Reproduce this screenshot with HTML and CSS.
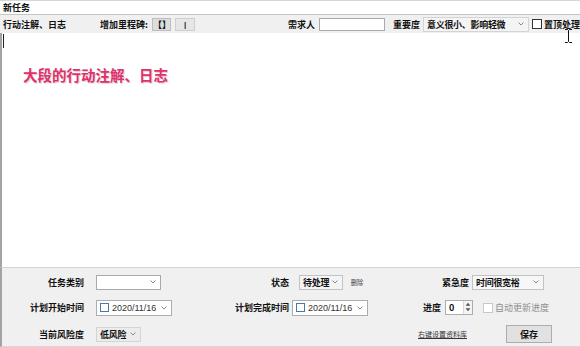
FILE: index.html
```html
<!DOCTYPE html>
<html lang="zh-CN">
<head>
  <meta charset="UTF-8">
  <title>新任务</title>
  <link rel="stylesheet" href="styles.css">
</head>
<body>

  <div class="window">
    <div class="title-row">新任务</div>

    <div class="toolbar">
      <span class="label log-label">行动注解、日志</span>
      <span class="label milestone-label">增加里程碑:</span>
      <button class="tool-btn">【】</button>
      <button class="tool-btn light">|</button>
      <span class="label requester-label">需求人</span>
      <span class="text-input requester"></span>
      <span class="label importance-label">重要度</span>
      <span class="combo importance">意义很小、影响轻微
        <svg class="chev" viewBox="0 0 6 4"><polyline points="0.5,0.5 3,3 5.5,0.5"/></svg>
      </span>
      <span class="check-box"></span>
      <span class="label">置顶处理</span>
    </div>

    <div class="editor">
      <span class="caret"></span>
      <p class="hint">大段的行动注解、日志</p>
    </div>

    <div class="form">
      <!-- row 1 -->
      <span class="label right">任务类别</span>
      <div class="cell"><span class="combo blank task-type">
        <svg class="chev" viewBox="0 0 6 4"><polyline points="0.5,0.5 3,3 5.5,0.5"/></svg>
      </span></div>
      <span class="label right">状态</span>
      <div class="cell"><span class="combo status">待处理
        <svg class="chev" viewBox="0 0 6 4"><polyline points="0.5,0.5 3,3 5.5,0.5"/></svg>
      </span><span class="tiny">删除</span></div>
      <div class="cell urgency-cell"><span class="label">紧急度</span><span class="combo urgency">时间很宽裕
        <svg class="chev" viewBox="0 0 6 4"><polyline points="0.5,0.5 3,3 5.5,0.5"/></svg>
      </span></div>

      <!-- row 2 -->
      <span class="label right">计划开始时间</span>
      <div class="cell"><span class="date start-date"><span class="date-check"></span><span class="date-text">2020/11/16</span>
        <svg class="chev" viewBox="0 0 6 4"><polyline points="0.5,0.5 3,3 5.5,0.5"/></svg>
      </span></div>
      <span class="label right">计划完成时间</span>
      <div class="cell"><span class="date end-date"><span class="date-check"></span><span class="date-text">2020/11/16</span>
        <svg class="chev" viewBox="0 0 6 4"><polyline points="0.5,0.5 3,3 5.5,0.5"/></svg>
      </span></div>
      <div class="cell progress-cell"><span class="label">进度</span>
        <span class="spin"><span class="spin-value">0</span><span class="spin-arrows">
          <svg viewBox="0 0 5 9"><polygon points="2.5,1 4.5,3.5 0.5,3.5"/><polygon points="0.5,5.5 4.5,5.5 2.5,8"/></svg>
        </span></span>
        <span class="check-box disabled"></span><span class="muted">自动更新进度</span>
      </div>

      <!-- row 3 -->
      <span class="label right">当前风险度</span>
      <div class="cell"><span class="combo risk">低风险
        <svg class="chev" viewBox="0 0 6 4"><polyline points="0.5,0.5 3,3 5.5,0.5"/></svg>
      </span></div>
      <span></span>
      <span></span>
      <div class="cell save-cell"><span class="link">右键设置资料库</span><button class="save-btn">保存</button></div>
    </div>

    <!-- mouse pointer over the top bar -->
    <svg class="ibeam" viewBox="0 0 9 14"><path d="M1 0.5h2.5l1 1 1-1H8M4.5 1.5v11M1 13.5h2.5l1-1 1 1H8"/></svg>
  </div>

</body>
</html>
```

FILE: styles.css
```css
body {
  margin: 0;
  background: #fff;
  font-family: "Noto Sans CJK SC", "Liberation Sans", sans-serif;
  font-size: 9px;
  color: #111;
}

.window {
  position: relative;
  width: 580px;
  height: 347px;
  display: flex;
  flex-direction: column;
  border-top: 1px solid #d6d6d6;
  box-sizing: border-box;
  overflow: hidden;
}

.label {
  font-weight: bold;
  white-space: nowrap;
}

.right {
  text-align: right;
}

.title-row {
  height: 13px;
  line-height: 13px;
  padding-left: 3px;
  font-weight: bold;
  border-bottom: 1px solid #c4c4c4;
}

.toolbar {
  height: 18px;
  display: flex;
  align-items: center;
  background: #f0f0f0;
}

.log-label {
  width: 97px;
  padding-left: 3px;
}

.milestone-label {
  width: 52px;
}

.tool-btn {
  height: 13px;
  width: 19px;
  margin-right: 4px;
  padding: 0;
  font-family: "Noto Sans CJK SC", sans-serif;
  font-size: 9px;
  font-weight: bold;
  line-height: 11px;
  background: #dedede;
  border: 1px solid #bdbdbd;
  color: #111;
}

.tool-btn.light {
  width: 20px;
  background: #e6e6e6;
  border-color: #cfcfcf;
  font-family: "Liberation Sans", sans-serif;
  font-size: 8px;
  color: #222;
}

.requester-label {
  margin-left: 89px;
  width: 31px;
}

.text-input {
  display: inline-block;
  height: 13px;
  background: #fff;
  border: 1px solid #a9a9a9;
  box-sizing: border-box;
}

.requester {
  width: 66px;
}

.importance-label {
  margin-left: 8px;
  width: 30px;
}

.combo {
  display: inline-flex;
  align-items: center;
  height: 14px;
  padding-left: 3px;
  background: #f4f4f4;
  border: 1px solid #c2c2c2;
  box-sizing: border-box;
  font-weight: bold;
  white-space: nowrap;
  letter-spacing: -0.3px;
}

.combo.blank {
  background: #fff;
  border-color: #a9a9a9;
}

.chev {
  flex-shrink: 0;
  width: 6px;
  height: 4px;
  margin-left: auto;
  margin-right: 4px;
  padding-left: 3px;
  fill: none;
  stroke: #8a8a8a;
  stroke-width: 1;
}

.importance {
  width: 106px;
  height: 15px;
  border-color: #d4d4d4;
}

.check-box {
  display: inline-block;
  width: 8px;
  height: 8px;
  margin: 0 2px 0 3px;
  border: 1px solid #333;
  background: #fff;
}

.check-box.disabled {
  border-color: #c8c8c8;
}

.editor {
  position: relative;
  flex: 1;
  background: #fff;
  border-left: 2px solid #a3a3a3;
}

.caret {
  position: absolute;
  left: 1px;
  top: 1px;
  width: 1px;
  height: 14px;
  background: #222;
}

.hint {
  margin: 31px 0 0 21px;
  font-size: 14.5px;
  font-weight: bold;
  color: #e2306c;
  text-shadow: 1px 1px 1px rgba(0, 0, 0, 0.18);
}

.form {
  height: 80px;
  display: grid;
  grid-template-columns: 82px 148px 57px 118px 1fr;
  grid-template-rows: 16px 17px 18px;
  row-gap: 9px;
  align-items: center;
  padding-top: 6px;
  box-sizing: border-box;
  background: #f0f0f0;
  border-top: 1px solid #d2d2d2;
  border-left: 2px solid #a3a3a3;
  border-bottom: 1px solid #d8d8d8;
}

.form > .label {
  margin-left: -2px;
}

.cell {
  display: flex;
  align-items: center;
}

.task-type {
  margin-left: 12px;
  width: 65px;
  height: 15px;
}

.status {
  margin-left: 10px;
  width: 44px;
  height: 15px;
}

.tiny {
  margin-left: 7px;
  font-size: 7px;
  color: #444;
  transform: scale(0.9);
}

.urgency-cell {
  padding-left: 35px;
}

.urgency {
  margin-left: 3px;
  width: 72px;
  height: 15px;
  background: #f7f7f7;
}

.date {
  display: inline-flex;
  align-items: center;
  width: 76px;
  height: 16px;
  background: #fff;
  border: 1px solid #adadad;
  box-sizing: border-box;
}

.start-date {
  margin-left: 12px;
}

.end-date {
  margin-left: 3px;
}

.date-check {
  width: 7px;
  height: 7px;
  margin: 0 3px 0 3px;
  border: 1px solid #4a78a8;
}

.date-text {
  font-family: "Liberation Sans", sans-serif;
  font-size: 9px;
  color: #333;
}

.progress-cell {
  padding-left: 16px;
}

.spin {
  display: inline-flex;
  margin-left: 4px;
  width: 28px;
  height: 15px;
  background: #fff;
  border: 1px solid #adadad;
  box-sizing: border-box;
}

.spin-value {
  flex: 1;
  padding-left: 3px;
  font-weight: bold;
  line-height: 13px;
}

.spin-arrows {
  width: 8px;
  border-left: 1px solid #d8d8d8;
  background: #f4f4f4;
}

.spin-arrows svg {
  display: block;
  width: 6px;
  height: 12px;
  margin: 0 auto;
  fill: #555;
}

.progress-cell .check-box {
  margin-left: 10px;
}

.muted {
  color: #8e8e8e;
  white-space: nowrap;
}

.risk {
  margin-left: 12px;
  width: 45px;
  height: 15px;
  background: #ececec;
  border-color: #d4d4d4;
}

.save-cell {
  padding-left: 11px;
}

.link {
  font-size: 7px;
  color: #333;
  text-decoration: underline;
  white-space: nowrap;
}

.save-btn {
  margin-left: 39px;
  width: 46px;
  height: 18px;
  padding: 0;
  font-family: "Noto Sans CJK SC", sans-serif;
  font-size: 9px;
  font-weight: bold;
  background: #e1e1e1;
  border: 1px solid #adadad;
  color: #111;
}

.ibeam {
  position: absolute;
  left: 564px;
  top: 28px;
  width: 9px;
  height: 14px;
  fill: none;
  stroke: #111;
  stroke-width: 1;
}
```
